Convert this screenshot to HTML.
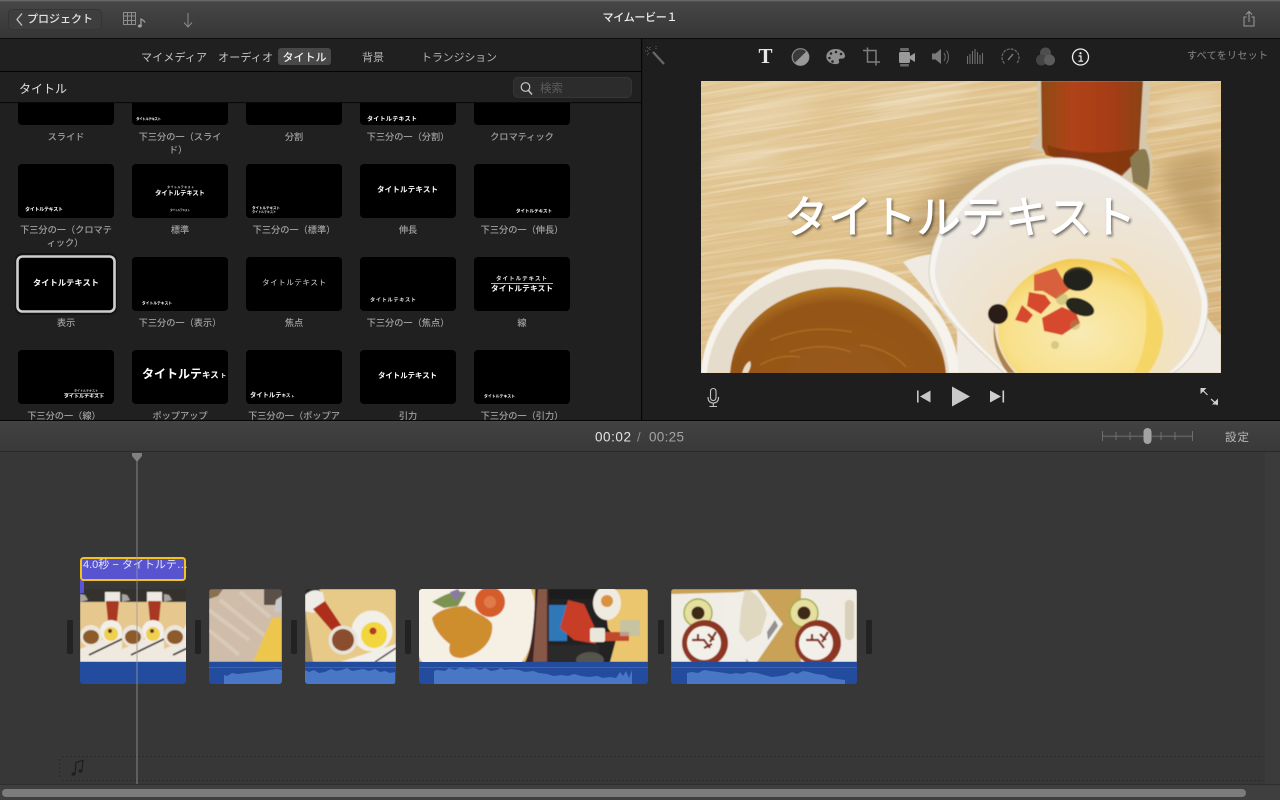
<!DOCTYPE html>
<html lang="ja"><head><meta charset="utf-8"><title>iMovie</title>
<style>
html,body{margin:0;padding:0;width:1280px;height:800px;overflow:hidden;background:#373737}
svg{display:block;position:absolute;left:0;top:0}
text{font-family:"Liberation Sans","Noto Sans CJK JP",sans-serif}
.lb{font-size:9.2px;fill:#a0a0a0;text-anchor:middle;font-weight:500}
.w{fill:#fff;font-weight:700}
</style></head><body>
<svg width="1280" height="800" viewBox="0 0 1280 800" xmlns="http://www.w3.org/2000/svg">
<defs>
<linearGradient id="tb" x1="0" y1="0" x2="0" y2="1"><stop offset="0" stop-color="#474747"/><stop offset="1" stop-color="#363636"/></linearGradient>
<linearGradient id="hb" x1="0" y1="0" x2="0" y2="1"><stop offset="0" stop-color="#424242"/><stop offset="1" stop-color="#393939"/></linearGradient>
<linearGradient id="wood" x1="0" y1="0" x2="1" y2="1"><stop offset="0" stop-color="#e2c896"/><stop offset=".5" stop-color="#dfbf88"/><stop offset="1" stop-color="#d2ae74"/></linearGradient>
<linearGradient id="tea" x1="0" y1="0" x2="1" y2="0"><stop offset="0" stop-color="#8f4a14"/><stop offset=".3" stop-color="#b0431a"/><stop offset=".7" stop-color="#a63c12"/><stop offset="1" stop-color="#8a4412"/></linearGradient>
<radialGradient id="bowl" cx=".6" cy=".85" r=".75"><stop offset="0" stop-color="#f8e4a4"/><stop offset=".5" stop-color="#f0e2ca"/><stop offset="1" stop-color="#ece7e1"/></radialGradient>
<radialGradient id="soup" cx=".5" cy=".6" r=".62"><stop offset="0" stop-color="#9a5c1c"/><stop offset=".82" stop-color="#945418"/><stop offset="1" stop-color="#b87c22"/></radialGradient>
<radialGradient id="pot" cx=".5" cy=".65" r=".65"><stop offset="0" stop-color="#f8eab4"/><stop offset=".7" stop-color="#f8e08a"/><stop offset="1" stop-color="#f3ca50"/></radialGradient>
<filter id="grain" x="0" y="0" width="100%" height="100%"><feTurbulence type="fractalNoise" baseFrequency="0.007 0.26" numOctaves="3" seed="7"/><feColorMatrix values="0 0 0 0 1  0 0 0 0 .96  0 0 0 0 .86  1 0 0 0 -.45"/></filter>
<filter id="grain2" x="0" y="0" width="100%" height="100%"><feTurbulence type="fractalNoise" baseFrequency="0.008 0.36" numOctaves="2" seed="3"/><feColorMatrix values="0 0 0 0 .66  0 0 0 0 .48  0 0 0 0 .24  .9 0 0 0 -.38"/></filter>
<filter id="ts" x="-5%" y="-20%" width="110%" height="140%"><feDropShadow dx="1.5" dy="2" stdDeviation="1.4" flood-color="#000" flood-opacity=".5"/></filter>
<filter id="bp"><feGaussianBlur stdDeviation=".6"/></filter>
<filter id="b8"><feGaussianBlur stdDeviation="8"/></filter>
<clipPath id="cGrid"><rect x="0" y="103" width="641" height="317"/></clipPath>
<clipPath id="cPrev"><rect x="701" y="81" width="520" height="292"/></clipPath>
<clipPath id="c1"><rect x="80" y="589" width="106" height="95" rx="3"/></clipPath>
<clipPath id="c2"><rect x="209" y="589" width="73" height="95" rx="3"/></clipPath>
<clipPath id="c3"><rect x="305" y="589" width="91" height="95" rx="3"/></clipPath>
<clipPath id="c4"><rect x="419" y="589" width="229" height="95" rx="3"/></clipPath>
<clipPath id="c5"><rect x="671" y="589" width="186" height="95" rx="3"/></clipPath>
<symbol id="tile" width="42" height="73" viewBox="0 0 42 73" overflow="hidden">
<rect width="42" height="73" fill="#e6c88e"/>
<rect width="42" height="13" fill="#35302e"/><path d="M0 5l5 1 3 5-8 2z" fill="#a8a4a0"/>
<rect x="25" y="3" width="15" height="10" fill="#eeeae2"/><path d="M26 12h13l-2 20h-9z" fill="#a83820"/>
<path d="M0 60L42 42V73H0z" fill="#efe9e0"/>
<circle cx="31" cy="42" r="11" fill="#f2efe8"/><circle cx="31" cy="45" r="7" fill="#f0d050"/><circle cx="30" cy="42" r="2" fill="#5a2a18"/>
<circle cx="11" cy="47" r="11" fill="#ece6dc"/><ellipse cx="11" cy="48" rx="8" ry="7" fill="#8d5a2c"/>
<path d="M9 66L42 50" stroke="#2a2422" stroke-width="1.800"/>
</symbol>
</defs>

<!-- top bar -->
<rect width="1280" height="38" fill="url(#tb)"/><rect width="1280" height="1.4" fill="#666"/><rect y="38" width="1280" height="1.2" fill="#0c0c0c"/>
<rect x="8.5" y="9.5" width="93" height="20" rx="4" fill="#3e3e3e" stroke="#353535"/>
<path d="M22 13.5L17 19.5l5 6" fill="none" stroke="#c4c4c4" stroke-width="1.3"/>
<text x="27" y="22.5" font-size="11" fill="#e2e2e2" font-weight="500" textLength="66">プロジェクト</text>
<g fill="none" stroke="#8e8e8e" stroke-width="1"><rect x="123.5" y="12.5" width="12" height="12"/><path d="M123.5 16h12M123.5 20.500h12M127.500 12.5v12M131.500 12.5v12"/></g>
<path d="M141 26v-7c1.500 .6 3 1.500 4 3.500" fill="none" stroke="#a4a4a4" stroke-width="1.200"/><ellipse cx="139.800" cy="26" rx="2" ry="1.500" fill="#a4a4a4"/>
<path d="M188 13v13.500M184 22.500l4 4.500 4-4.500" fill="none" stroke="#8a8a8a" stroke-width="1"/>
<text x="640" y="21" font-size="11" fill="#eee" text-anchor="middle" font-weight="500" textLength="75">マイムービー１</text>
<path d="M1249 12v10M1246 14.500l3-3 3 3M1246.500 17h-2.500v9h10v-9h-2.500" fill="none" stroke="#9a9a9a" stroke-width="1"/>

<!-- left panel -->
<rect x="0" y="39" width="641" height="381" fill="#202020"/>
<rect x="0" y="71" width="641" height="1" fill="#050505"/>
<rect x="0" y="102" width="641" height="1.200" fill="#0a0a0a"/>
<text x="141" y="61" font-size="11" fill="#c4c4c4" textLength="66">マイメディア</text>
<text x="218" y="61" font-size="11" fill="#c4c4c4" textLength="55">オーディオ</text>
<rect x="278" y="48" width="53" height="17" rx="3" fill="#484848"/>
<text x="282.500" y="61" font-size="11" fill="#f0f0f0" font-weight="500" textLength="44">タイトル</text>
<text x="362" y="61" font-size="11" fill="#b4b4b4" textLength="22">背景</text>
<text x="421" y="61" font-size="11" fill="#b4b4b4" textLength="76">トランジション</text>
<text x="19" y="93" font-size="12" fill="#e0e0e0" textLength="48">タイトル</text>
<rect x="513.500" y="77.500" width="118" height="20" rx="5" fill="#2c2c2c" stroke="#353535"/>
<circle cx="525.500" cy="87" r="4.300" fill="none" stroke="#c8c8c8" stroke-width="1.200"/><path d="M528.500 90.500l3.500 4" stroke="#c8c8c8" stroke-width="1.400"/>
<text x="540" y="92" font-size="11.500" fill="#5c5c5c">検索</text>

<!-- grid -->
<g clip-path="url(#cGrid)">
<g fill="#000">
<rect x="18" y="71" width="96" height="54" rx="4"/><rect x="132" y="71" width="96" height="54" rx="4"/><rect x="246" y="71" width="96" height="54" rx="4"/><rect x="360" y="71" width="96" height="54" rx="4"/><rect x="474" y="71" width="96" height="54" rx="4"/>
<rect x="18" y="164" width="96" height="54" rx="4"/><rect x="132" y="164" width="96" height="54" rx="4"/><rect x="246" y="164" width="96" height="54" rx="4"/><rect x="360" y="164" width="96" height="54" rx="4"/><rect x="474" y="164" width="96" height="54" rx="4"/>
<rect x="132" y="257" width="96" height="54" rx="4"/><rect x="246" y="257" width="96" height="54" rx="4"/><rect x="360" y="257" width="96" height="54" rx="4"/><rect x="474" y="257" width="96" height="54" rx="4"/>
<rect x="18" y="350" width="96" height="54" rx="4"/><rect x="132" y="350" width="96" height="54" rx="4"/><rect x="246" y="350" width="96" height="54" rx="4"/><rect x="360" y="350" width="96" height="54" rx="4"/><rect x="474" y="350" width="96" height="54" rx="4"/>
</g>
<rect x="15" y="253" width="102" height="62" rx="7" fill="#000" opacity=".35"/>
<rect x="17.500" y="256.500" width="97" height="55" rx="5" fill="#000" stroke="#cfcfcf" stroke-width="2.600"/>

<text class="w" x="136" y="120" font-size="3.500" textLength="25">タイトルテキスト</text>
<text class="w" x="367" y="121" font-size="6" textLength="50">タイトルテキスト</text>

<text class="w" x="25" y="211" font-size="5" textLength="38">タイトルテキスト</text>
<text class="w" x="167" y="188" font-size="3" textLength="27" opacity=".8">タイトルテキスト</text>
<text class="w" x="155" y="195" font-size="6.500" textLength="50">タイトルテキスト</text>
<text class="w" x="170" y="211" font-size="2.800" textLength="20" opacity=".7">タイトルテキスト</text>
<text class="w" x="252" y="209" font-size="3.600" textLength="28">タイトルテキスト</text>
<text class="w" x="252" y="213" font-size="3.200" textLength="24" opacity=".8">タイトルテキスト</text>
<text class="w" x="377" y="192" font-size="7.500" textLength="61">タイトルテキスト</text>
<text class="w" x="516" y="212.500" font-size="4.500" textLength="36">タイトルテキスト</text>

<text class="w" x="33" y="285.500" font-size="8.200" textLength="66">タイトルテキスト</text>
<text class="w" x="142" y="304.500" font-size="3.800" textLength="30">タイトルテキスト</text>
<text x="262" y="285" font-size="7.500" fill="#d8d8d8" textLength="64">タイトルテキスト</text>
<text x="370" y="301.500" font-size="5.200" fill="#e0e0e0" font-weight="700" textLength="46">タイトルテキスト</text>
<text x="496" y="280.500" font-size="5.500" fill="#e4e4e4" font-weight="700" textLength="51">タイトルテキスト</text>
<rect x="491" y="283" width="62" height=".8" fill="#ddd"/>
<text class="w" x="491" y="291" font-size="7.500" textLength="62">タイトルテキスト</text>

<text class="w" x="74" y="391.500" font-size="3" textLength="24" opacity=".8">タイトルテキスト</text>
<rect x="64" y="393" width="40" height=".6" fill="#ccc"/>
<text class="w" x="64" y="397.500" font-size="4.800" textLength="40">タイトルテキスト</text>
<text class="w" x="142" y="378" font-size="12">タイトルテ<tspan font-size="8.500">キス</tspan><tspan font-size="6"> ト</tspan></text>
<text class="w" x="250" y="397" font-size="6.300">タイトルテ<tspan font-size="4.500">キス</tspan><tspan font-size="3"> ト</tspan></text>
<text class="w" x="378" y="378" font-size="7.400" textLength="59">タイトルテキスト</text>
<text class="w" x="484" y="397.500" font-size="3.900" textLength="31">タイトルテキスト</text>

<text class="lb" x="66" y="140">スライド</text>
<text class="lb" x="180" y="140">下三分の一（スライ</text><text class="lb" x="178" y="153">ド）</text>
<text class="lb" x="294" y="140">分割</text>
<text class="lb" x="408" y="140">下三分の一（分割）</text>
<text class="lb" x="522" y="140">クロマティック</text>
<text class="lb" x="66" y="233">下三分の一（クロマテ</text><text class="lb" x="65" y="246">ィック）</text>
<text class="lb" x="180" y="233">標準</text>
<text class="lb" x="294" y="233">下三分の一（標準）</text>
<text class="lb" x="408" y="233">伸長</text>
<text class="lb" x="522" y="233">下三分の一（伸長）</text>
<text class="lb" x="66" y="326">表示</text>
<text class="lb" x="180" y="326">下三分の一（表示）</text>
<text class="lb" x="294" y="326">焦点</text>
<text class="lb" x="408" y="326">下三分の一（焦点）</text>
<text class="lb" x="522" y="326">線</text>
<text class="lb" x="64" y="419">下三分の一（線）</text>
<text class="lb" x="180" y="419">ポップアップ</text>
<text class="lb" x="294" y="419">下三分の一（ポップア</text>
<text class="lb" x="408" y="419">引力</text>
<text class="lb" x="522" y="419">下三分の一（引力）</text>
</g>

<!-- viewer panel -->
<rect x="641" y="39" width="639" height="381" fill="#1e1e1e"/>
<rect x="641" y="39" width="1.200" height="381" fill="#070707"/>
<rect x="0" y="420" width="1280" height="1.400" fill="#060606"/>

<!-- wand -->
<g fill="none" stroke="#666"><path d="M653 52l11 12" stroke-width="2.400"/><path d="M650 47v4M645 51h4M647 47l2 2M656 46v3M647 55l2-2" stroke-width="1" stroke-dasharray="1 1"/></g>
<!-- T -->
<text x="765.500" y="63" font-size="21" text-anchor="middle" fill="#e8e8e8" font-weight="700" style="font-family:'Liberation Serif',serif">T</text>
<!-- color correction -->
<circle cx="800.500" cy="57" r="8.300" fill="#3a3a3a" stroke="#8a8a8a" stroke-width="1.200"/><path d="M806.500 51.200a8.300 8.300 0 0 1-11.800 11.700z" fill="#999"/>
<!-- palette -->
<path d="M835.500 49c5.500 0 9.500 3.200 9.500 7 0 2.500-2.500 2.800-4.200 2.600-2-.2-2.500 1.400-1.800 2.500.8 1.400-.4 3-3.200 3-5.500 0-9.500-3.300-9.500-7.500s3.900-7.600 9.200-7.600z" fill="#8f8f8f"/>
<g fill="#262626"><circle cx="831" cy="53.500" r="1.300"/><circle cx="836" cy="52" r="1.300"/><circle cx="841" cy="54" r="1.300"/><circle cx="829.500" cy="58" r="1.300"/><circle cx="832.500" cy="61.500" r="1.300"/></g>
<!-- crop -->
<path d="M863 50.500h4.500v-1M867.500 47.500v14.500h11.500M867.500 50.500h8.500v15M876 62v3.500M879 62h1" fill="none" stroke="#7e7e7e" stroke-width="1.500"/>
<!-- camera -->
<rect x="899" y="52" width="11" height="11" rx="1.500" fill="#9a9a9a"/><path d="M910 56l5-3v9l-5-3z" fill="#9a9a9a"/><rect x="900" y="48" width="9" height="3" rx="1" fill="#6a6a6a"/><rect x="900" y="64" width="9" height="2.500" rx="1" fill="#6a6a6a"/>
<!-- speaker -->
<path d="M932 53.500h3.500l5.500-4.500v15l-5.500-4.500H932z" fill="#7a7a7a"/><path d="M944 53c1.600 2.400 1.600 5.600 0 8M946.500 50.500c2.600 3.800 2.600 9.200 0 13" fill="none" stroke="#6e6e6e" stroke-width="1"/>
<!-- eq -->
<path d="M967.500 56v8M970 54v10M972.500 51v13M975 49v15M977.500 52v12M980 55v9M982.500 53v11" stroke="#6e6e6e" stroke-width="1.100"/>
<!-- speedometer -->
<path d="M1004.500 63.500a8.500 8.500 0 1 1 12 0" fill="none" stroke="#6a6a6a" stroke-width="1.200" stroke-dasharray="3 1"/><path d="M1008 60l5-6" stroke="#777" stroke-width="1.400"/>
<!-- overlap -->
<circle cx="1045.500" cy="53" r="5.500" fill="#4e4e4e"/><circle cx="1041.500" cy="60" r="5.500" fill="#444"/><circle cx="1049.500" cy="60" r="5.500" fill="#5c5c5c"/>
<!-- info -->
<circle cx="1080.500" cy="57" r="8" fill="none" stroke="#f0f0f0" stroke-width="1.300"/><circle cx="1080.500" cy="53.200" r="1.100" fill="#f0f0f0"/><path d="M1078.500 56h2.500v5M1078.500 61.200h4.500" fill="none" stroke="#f0f0f0" stroke-width="1.200"/>
<text x="1187" y="59" font-size="10" fill="#8a8a8a" textLength="81">すべてをリセット</text>

<!-- preview -->
<g clip-path="url(#cPrev)">
<rect x="701" y="81" width="520" height="292" fill="url(#wood)"/>
<g transform="rotate(-9 960 230)"><rect x="640" y="40" width="640" height="400" filter="url(#grain2)"/><rect x="640" y="40" width="640" height="400" filter="url(#grain)"/></g>
<g fill="#f2e6cc" opacity=".55" filter="url(#b8)"><ellipse cx="760" cy="118" rx="60" ry="7" transform="rotate(-12 760 118)"/><ellipse cx="920" cy="100" rx="50" ry="8" transform="rotate(-12 920 100)"/><ellipse cx="740" cy="160" rx="45" ry="7" transform="rotate(-12 740 160)"/><ellipse cx="890" cy="180" rx="50" ry="6" transform="rotate(-12 890 180)"/><ellipse cx="1190" cy="105" rx="35" ry="9" transform="rotate(-12 1190 105)"/></g>
<path d="M890 240C930 180 1000 150 1040 160L960 260z" fill="#9b7a48" opacity=".4" filter="url(#b8)"/>
<path d="M1160 170C1190 150 1210 150 1221 155V240L1180 210z" fill="#a88650" opacity=".45" filter="url(#b8)"/>
<g filter="url(#bp)">
<!-- glass -->
<path d="M1037 81h114l-5 62c4 3 7 10 6 26-1 14-3 19-6 20l-30-15-86-26c-1-6 4-11 9-13z" fill="#d6c8ac"/>
<path d="M1041 81h102l-4 70-9 16-14 12-30-12-40-12-4-8z" fill="url(#tea)"/>
<path d="M1047 145c24 8 54 10 88 4l-4 18-12 12-30-12-40-12z" fill="#7e3510" opacity=".75"/>
<path d="M1130 158c6-7 12-11 16-8 5 10 5 28 1 40l-14-8z" fill="#8a7a50"/>
<!-- plate -->
<path d="M903 262C912 258 924 254 936 254L1006 373H957V330z" fill="#efeae2"/>
<path d="M1203 312L1221 335V373H1150z" fill="#efeae2"/>
<!-- large bowl -->
<path d="M929 272C930 235 955 195 1004 168 1030 156 1075 153 1105 168 1150 188 1190 235 1207 296 1212 325 1195 360 1173 373L1004 373C975 345 930 310 929 272z" fill="#f6f4f0" stroke="#d8d0c2" stroke-width="1"/>
<path d="M935 272C936 238 960 200 1007 174 1032 162 1074 160 1102 174 1145 193 1184 238 1201 297 1205 325 1190 358 1168 373L1008 373C980 345 936 308 935 272z" fill="url(#bowl)"/>
<!-- potato -->
<path d="M998 330c0-30 30-64 70-71 40-2 85 18 94 62 2 24-14 44-30 52h-114c-14-12-20-28-20-43z" fill="url(#pot)"/>
<path d="M1110 258c14-2 30 14 38 38l14 26c4 16-4 40-14 51h-14c12-20 18-60 6-90z" fill="#f5d566"/>
<path d="M995 320c-2 20 8 40 20 53h-7c-12-14-17-36-13-53z" fill="#8a5a18" opacity=".7"/>
<!-- toppings -->
<path d="M1034 275l22-7 7 12 7 9-14 10-13-8-9 0z" fill="#d9603c"/>
<path d="M1029 292l16 3 6 8-10 11-14-8zM1022 305l11 10-6 8-12-3zM1042 318l20-11 14 6 4 10-18 12-18-4z" fill="#d6482e"/>
<ellipse cx="1078" cy="279" rx="15" ry="12" fill="#23241a"/><path d="M1066 273c8-7 20-6 25 1" stroke="#443c22" fill="none" stroke-width="2"/>
<ellipse cx="1080" cy="307" rx="15" ry="8" fill="#25261a" transform="rotate(22 1080 307)"/>
<ellipse cx="998" cy="314" rx="10" ry="10" fill="#2a1c18"/>
<g fill="#a0a060" opacity=".4"><circle cx="1062" cy="299" r="6"/><circle cx="1075" cy="325" r="5"/><circle cx="1055" cy="345" r="4"/></g>
<!-- small bowl -->
<path d="M701 373c4-64 62-114 130-114s126 50 128 114z" fill="#f6f2ec"/>
<path d="M707 373c5-58 56-104 124-104 62 0 114 44 118 104z" fill="#e6dccb"/>
<ellipse cx="838" cy="377" rx="108" ry="90" fill="url(#soup)"/>
<g fill="none" stroke="#b87c28" stroke-width="1.500" opacity=".6"><path d="M770 340c26-10 50-14 82-8M790 352c24-8 46-6 60 0M760 365c14-8 28-10 40-8M860 345c18 2 36 10 46 22"/></g>
<path d="M742 373c2-6 4-10 8-12 2 4 0 8-2 12z" fill="#e8dcc4"/>
</g>
<!-- title -->
<text x="960" y="232.500" font-size="44" fill="#fff" stroke="#fff" stroke-width=".9" text-anchor="middle" font-weight="400" filter="url(#ts)" textLength="352" style="font-family:'Liberation Sans','Noto Sans CJK JP',sans-serif">タイトルテキスト</text>
</g>

<!-- transport -->
<g fill="none" stroke="#c4c4c4" stroke-width="1.100"><rect x="710.500" y="388.500" width="5.500" height="12" rx="2.700"/><path d="M708 397c0 4 2 6 5.300 6s5.300-2 5.300-6M713.300 403v3M709.500 406.500h7.500"/></g>
<path d="M917 390.500h1.600v12H917zM930.500 390.500v12l-10.500-6z" fill="#c8c8c8"/>
<path d="M952 386.500l18 10-18 10z" fill="#c8c8c8"/>
<path d="M1002.500 390.500h1.600v12h-1.600zM990 390.500l11 6-11 6z" fill="#d0d0d0"/>
<g fill="none" stroke="#cfcfcf" stroke-width="1.200"><path d="M1201 388.500l6.500 6.500M1211 399l6.500 6"/></g>
<path d="M1200.500 388h6l-6 6zM1218 404.500h-6l6-6z" fill="#cfcfcf"/>

<!-- timeline header -->
<rect x="0" y="421" width="1280" height="30" fill="url(#hb)"/>
<rect x="0" y="451" width="1280" height="1" fill="#2a2a2a"/>
<text x="595" y="441.500" font-size="13.500" fill="#e4e4e4" textLength="36">00:02</text>
<text x="637" y="441.500" font-size="13" fill="#909090">/</text>
<text x="649" y="441.500" font-size="13.500" fill="#a4a4a4" textLength="35">00:25</text>
<rect x="1102" y="435.500" width="91" height="1.600" fill="#5e5e5e"/>
<path d="M1102.500 431v10M1116 432v8M1130 432v8M1161 432v8M1175 432v8M1192.500 431v10" stroke="#6e6e6e" stroke-width="1"/>
<rect x="1143.500" y="428" width="8" height="16" rx="4" fill="#a2a2a2"/>
<text x="1225" y="441" font-size="11.500" fill="#b8b8b8" textLength="24">設定</text>

<!-- timeline -->
<rect x="0" y="452" width="1280" height="348" fill="#373737"/>
<rect x="1265" y="452" width="15" height="333" fill="#3b3b3b"/>

<!-- audio track -->
<g fill="none" stroke="#2a2a2a" stroke-dasharray="2 2"><path d="M62 756.500H1263M62 780.500H1263M59.500 759v19"/></g>
<path d="M75 773.500l1-11 7-2-1 10" fill="none" stroke="#1e1e1e" stroke-width="1.200"/><ellipse cx="73.500" cy="774" rx="2" ry="1.600" fill="#1e1e1e"/><ellipse cx="80.500" cy="771" rx="2" ry="1.600" fill="#1e1e1e"/>

<!-- gap handles -->
<g fill="#222"><rect x="67" y="620" width="6" height="34" rx="1.500"/><rect x="195" y="620" width="6" height="34" rx="1.500"/><rect x="291" y="620" width="6" height="34" rx="1.500"/><rect x="405" y="620" width="6" height="34" rx="1.500"/><rect x="658" y="620" width="6" height="34" rx="1.500"/><rect x="866" y="620" width="6" height="34" rx="1.500"/></g>

<!-- clip 1 -->
<g clip-path="url(#c1)">
<g filter="url(#bp)"><use href="#tile" x="80" y="589"/><use href="#tile" x="122" y="589"/><use href="#tile" x="164" y="589"/></g>
<rect x="80" y="662" width="106" height="22" fill="#234c9e"/>
</g>
<rect x="80" y="580" width="4" height="13" fill="#5a55d6"/>
<rect x="81" y="558" width="104" height="22" rx="2.500" fill="#5853cf" stroke="#f4c21c" stroke-width="2"/>
<text x="83" y="568" font-size="11" fill="#e4e4fa">4.0秒 − タイトルテ…</text>

<!-- clip 2 -->
<g clip-path="url(#c2)">
<g filter="url(#bp)">
<rect x="209" y="589" width="73" height="73" fill="#cfbda9"/>
<path d="M209 610l40 30M220 600l50 40M209 630l30 25M240 592l30 25" stroke="#e0d2c2" stroke-width="4" opacity=".6"/>
<path d="M209 589h14l-5 7-9 3z" fill="#8a7050"/>
<path d="M264 589h18v20l-5-4h-13z" fill="#5a5048"/><path d="M276 600l6-4v16h-8z" fill="#c8c8c8"/>
<path d="M282 618v44h-29l19-44z" fill="#ecc64e"/>
</g>
<rect x="209" y="662" width="73" height="22" fill="#234c9e"/><rect x="209" y="667" width="73" height="1" fill="#3a64b4"/>
<path d="M224 684v-9l3 1 5-3 6 1 8-1 10-1 8-1 6-1 7-1 5 1v14z" fill="#4a76c6"/>
</g>

<!-- clip 3 -->
<g clip-path="url(#c3)">
<g filter="url(#bp)">
<rect x="305" y="589" width="91" height="73" fill="#e8ca88"/>
<path d="M305 589h14l4 6-18 14z" fill="#2a2624"/><path d="M305 609V662h8z" fill="#a89060"/>
<path d="M305 595c6-6 14-6 18-2l2 12-12 8-8-2z" fill="#efece6"/>
<path d="M313 609l12-8 20 30-7 7z" fill="#ae2f1e"/>
<path d="M340 662l56-18v18z" fill="#f2eee8"/><path d="M375 662l21-14" stroke="#3a3a3a" stroke-width="1.500"/>
<circle cx="372" cy="631" r="20.500" fill="#f2efe8"/><circle cx="374" cy="635" r="13" fill="#f2d63c"/><circle cx="373" cy="631" r="3.500" fill="#b23a22"/>
<circle cx="343" cy="640" r="14.500" fill="#e8e2d8"/><circle cx="343" cy="640" r="11" fill="#8a4e2e"/>
</g>
<rect x="305" y="662" width="91" height="22" fill="#234c9e"/><rect x="305" y="667" width="91" height="1" fill="#3a64b4"/>
<path d="M305 684v-14l4 2 5-2 5 3 6-1 6-3 5 2 6-1 5-2 5 3 6-1 5-1 6 2 6-2 5 3 5-1 5 2 5-1v12z" fill="#4a76c6"/>
</g>

<!-- clip 4 -->
<g clip-path="url(#c4)">
<g filter="url(#bp)">
<rect x="419" y="589" width="229" height="73" fill="#e6c070"/>
<ellipse cx="472" cy="617" rx="64" ry="72" fill="#f5efe4"/>
<path d="M432 602c10-6 20-12 34-10l-8 14-14 2z" fill="#7c9250"/><path d="M450 592l8-3 4 6-7 6z" fill="#8a7aa0"/>
<circle cx="490" cy="602" r="15" fill="#d65c2c"/><circle cx="490" cy="602" r="6" fill="#e07a48"/>
<path d="M432 618c8-10 24-12 34-12 6 6 22 10 26 18 2 16-10 30-30 34-12 0-14-6-12-14-6-4-16-14-18-26z" fill="#cf8e2e"/>
<path d="M535 589h14v73h-24c6-10 10-40 10-73z" fill="#3e2420"/><path d="M538 589h9v73h-14z" fill="#9a6550" opacity=".8"/>
<rect x="549" y="589" width="99" height="73" fill="#202024"/>
<rect x="549" y="605" width="18" height="36" fill="#2f78b8"/><rect x="549" y="589" width="46" height="10" fill="#1a1a1a"/>
<path d="M568 600l16 4 10 22 2 18-22-4-14-12z" fill="#c83c28"/>
<path d="M603 589h45v73h-38l6-22-8-12z" fill="#ecc66e"/>
<ellipse cx="607" cy="603" rx="14" ry="17" fill="#f0ebe0"/><circle cx="607" cy="601" r="6" fill="#d8923c"/>
<rect x="590" y="628" width="15" height="14" rx="2" fill="#eae6da"/><rect x="605" y="632" width="24" height="9" fill="#c24a2a"/>
<path d="M620 620h20v16h-20z" fill="#b8c0b4" opacity=".7"/>
<rect x="549" y="645" width="50" height="17" fill="#2c2c2a"/><ellipse cx="590" cy="660" rx="14" ry="8" fill="#55544e"/>
</g>
<rect x="419" y="662" width="229" height="22" fill="#234c9e"/><rect x="419" y="667" width="229" height="1" fill="#3a64b4"/>
<path d="M434 684v-13l3-1 8 1 4-3 6 2 6-3 5 2 8-1 6 2 5-2 6 3 6-1 4-2 4 2 6-1 8 1 6 2 8-1 6 2 8 1 7 2 7-1 7 1 6-2 7 2 8 1 8-1 6 2 7-1 6 1 4-6 3 4 3-5 3 7 3-8v16z" fill="#4a76c6"/>
</g>

<!-- clip 5 -->
<g clip-path="url(#c5)">
<g filter="url(#bp)">
<rect x="671" y="589" width="186" height="73" fill="#c9a258"/>
<path d="M671 594l75-2v70h-75z" fill="#f0ece6"/>
<path d="M725 596c10-4 22-6 32-6l26 34-26 38-8 0-24-30z" fill="#f1eee8"/>
<path d="M745 590c10 0 18 12 22 24l-6 20-14 8-8-10 2-24z" fill="#e0d8c0"/><path d="M768 640l10-14-3-6-8 12z" fill="#6a6a6a" opacity=".7"/>
<circle cx="698" cy="613" r="14" fill="#e6dfa0" stroke="#9bad3e" stroke-width="1.400"/><circle cx="698" cy="613" r="6.500" fill="#3e2a14"/>
<circle cx="705" cy="643" r="23" fill="#8e3424"/><circle cx="704" cy="643" r="17" fill="#f3f0ea"/>
<path d="M692 640h12l6 8M698 640v-6M716 632l-6 10M708 634l6 6M712 644l-8 4" stroke="#7e2a1c" stroke-width="2.200" fill="none"/>
<rect x="801" y="589" width="56" height="73" fill="#f0ece4"/>
<circle cx="804" cy="613" r="14" fill="#e6dfa0" stroke="#9bad3e" stroke-width="1.400"/><circle cx="804" cy="613" r="6.500" fill="#3e2a14"/>
<circle cx="818" cy="643" r="23" fill="#8e3424"/><circle cx="816" cy="643" r="17" fill="#f3f0ea"/>
<path d="M806 640h12l6 8M812 640v-6M828 632l-6 10M820 634l6 6" stroke="#7e2a1c" stroke-width="2.200" fill="none"/>
<rect x="845" y="600" width="9" height="40" rx="4" fill="#d8d0b8"/>
</g>
<rect x="671" y="662" width="186" height="22" fill="#234c9e"/><rect x="671" y="667" width="186" height="1" fill="#3a64b4"/>
<path d="M687 684v-11l5-1 6 1 6-3 6 1 8 1 7 1 6 1 5-1 6 1 7-2 8 1 7 2 8 2 8-1 6-1 6-3 5 2 6-3 6 1 7 2 8 1 6 3 7 1 8 1v8z" fill="#4a76c6"/>
</g>

<!-- playhead -->
<rect x="136.500" y="461" width="1" height="324" fill="#9a9a9a" opacity=".8"/>
<path d="M132 453h10v3l-5 6-5-6z" fill="#808080"/>

<!-- scrollbar -->
<rect x="0" y="784" width="1280" height="1" fill="#2e2e2e"/>
<rect x="0" y="785" width="1280" height="15" fill="#3f3f3f"/>
<rect x="2" y="789" width="1244" height="8" rx="4" fill="#7c7c7c"/>
</svg>
</body></html>
